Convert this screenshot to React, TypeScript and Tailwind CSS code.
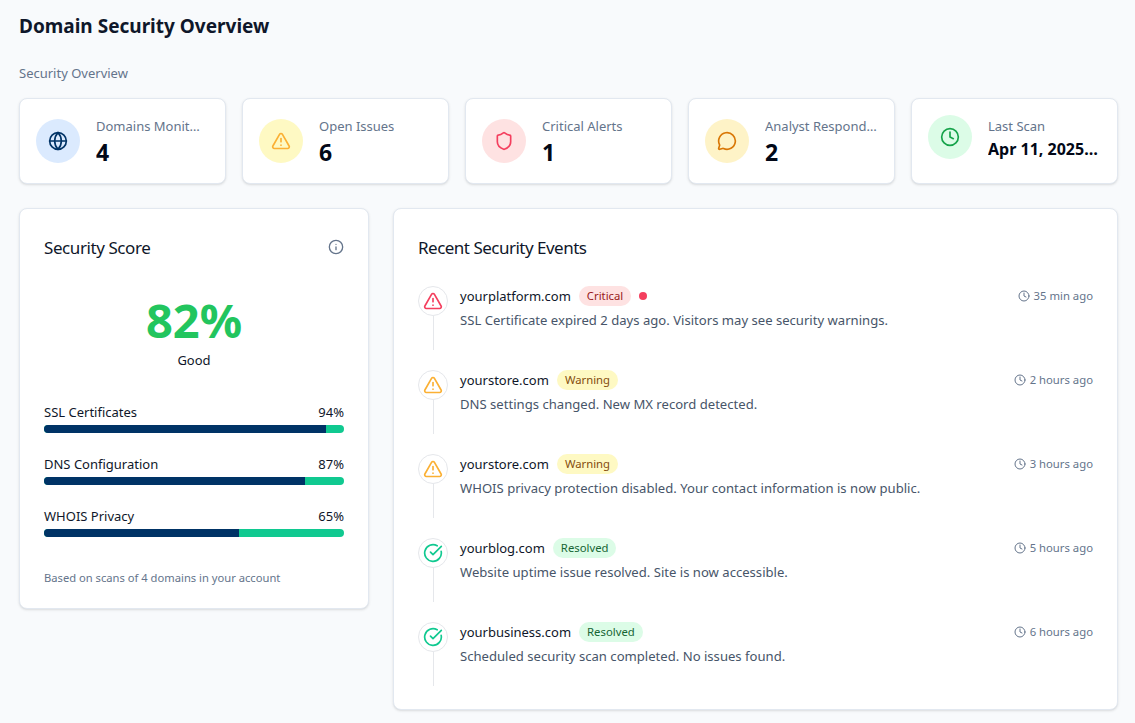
import { Globe, TriangleAlert, Shield, MessageCircle, Clock, Info, CircleCheckBig } from "lucide-react";

const stats = [
  { label: "Domains Monitored", value: "4", icon: Globe, bg: "bg-[#dbeafe]", color: "text-[#003366]", labelCls: "pr-0.5" },
  { label: "Open Issues", value: "6", icon: TriangleAlert, bg: "bg-[#fef9c3]", color: "text-[#fbb034]" },
  { label: "Critical Alerts", value: "1", icon: Shield, bg: "bg-[#fee2e2]", color: "text-[#f43f5e]" },
  { label: "Analyst Responded", value: "2", icon: MessageCircle, bg: "bg-[#fef3c7]", color: "text-[#d97706]" },
  { label: "Last Scan", value: "Apr 11, 2025 09:42", icon: Clock, bg: "bg-[#dcfce7]", color: "text-[#16a34a]", small: true },
];

const scores = [
  { label: "SSL Certificates", pct: 94 },
  { label: "DNS Configuration", pct: 87 },
  { label: "WHOIS Privacy", pct: 65 },
];

const badges = {
  critical: { label: "Critical", cls: "bg-[#fee2e2] text-[#991b1b]", icon: TriangleAlert, color: "text-[#f43f5e]" },
  warning: { label: "Warning", cls: "bg-[#fef9c3] text-[#854d0e]", icon: TriangleAlert, color: "text-[#fbb034]" },
  resolved: { label: "Resolved", cls: "bg-[#dcfce7] text-[#166534]", icon: CircleCheckBig, color: "text-[#10c990]" },
};

const events = [
  { domain: "yourplatform.com", type: "critical", text: "SSL Certificate expired 2 days ago. Visitors may see security warnings.", time: "35 min ago", live: true },
  { domain: "yourstore.com", type: "warning", text: "DNS settings changed. New MX record detected.", time: "2 hours ago" },
  { domain: "yourstore.com", type: "warning", text: "WHOIS privacy protection disabled. Your contact information is now public.", time: "3 hours ago" },
  { domain: "yourblog.com", type: "resolved", text: "Website uptime issue resolved. Site is now accessible.", time: "5 hours ago" },
  { domain: "yourbusiness.com", type: "resolved", text: "Scheduled security scan completed. No issues found.", time: "6 hours ago" },
] as const;

export default function App() {
  return (
    <div className="min-h-screen bg-[#f8fafc] pl-[19px] pr-[17px] pt-[12px] font-['Noto_Sans',sans-serif] text-[#0f172a]">
      <h1 className="text-[19px] leading-[28px] font-bold">Domain Security Overview</h1>
      <p className="mt-[24px] text-[13px] leading-[18px] text-[#64748b]">Security Overview</p>

      {/* Stat cards */}
      <div className="mt-[16px] grid grid-cols-5 gap-4">
        {stats.map((s) => (
          <div key={s.label} className="rounded-lg border border-[#e2e8f0] bg-white p-4 shadow-sm">
            <div className="flex items-center gap-4">
              <div className={`flex h-11 w-11 shrink-0 items-center justify-center rounded-full ${s.small ? "self-start" : ""} ${s.bg} ${s.color}`}>
                <s.icon className="h-5 w-5" />
              </div>
              <div className="min-w-0">
                <p className={`truncate text-[13px] leading-[22px] text-[#64748b] ${s.labelCls ?? ""}`}>{s.label}</p>
                <p className={`truncate font-bold text-[#020817] ${s.small ? "text-[16px] leading-[24px]" : "text-[23px] leading-[30px]"}`}>{s.value}</p>
              </div>
            </div>
          </div>
        ))}
      </div>

      <div className="mt-6 flex items-start gap-6 pb-[13px]">
        {/* Score */}
        <div className="h-[401px] w-[350px] shrink-0 rounded-lg border border-[#e2e8f0] bg-white p-6 shadow-sm">
          <div className="flex h-[30px] items-center justify-between">
            <h2 className="text-[17px] leading-[30px] tracking-tight">Security Score</h2>
            <Info className="-mt-0.5 h-4 w-4 text-[#64748b]" />
          </div>
          <div className="mt-[27px] text-center">
            <p className="text-[47px] leading-[60px] font-bold text-[#22c55e]">82%</p>
            <p className="text-[13px] leading-[20px]">Good</p>
          </div>
          <div className="mt-[32px] flex flex-col gap-[21px]">
            {scores.map((r) => (
              <div key={r.label}>
                <div className="flex justify-between text-[13px] leading-[20px]">
                  <span>{r.label}</span>
                  <span>{r.pct}%</span>
                </div>
                <div className="mt-[3px] h-2 overflow-hidden rounded-full bg-[#10c990]">
                  <div className="h-full bg-[#003366]" style={{ width: `${r.pct}%` }} />
                </div>
              </div>
            ))}
          </div>
          <p className="mt-[33px] text-[11.2px] leading-[16px] text-[#64748b]">Based on scans of 4 domains in your account</p>
        </div>

        {/* Events */}
        <div className="h-[502px] flex-1 rounded-lg border border-[#e2e8f0] bg-white p-6 shadow-sm">
          <h2 className="text-[17px] leading-[30px] tracking-[-0.03em]">Recent Security Events</h2>
          <div className="mt-[23px]">
            {events.map((e) => {
              const b = badges[e.type];
              return (
                <div key={e.text} className="flex h-[84px] gap-3">
                  <div className="flex w-[30px] shrink-0 flex-col items-center">
                    <div className={`flex h-[30px] w-[30px] items-center justify-center rounded-full border border-[#e5e7eb] bg-white ${b.color}`}>
                      <b.icon className="h-5 w-5" />
                    </div>
                    <div className="h-[34px] w-px bg-[#e5e7eb]" />
                  </div>
                  <div className="min-w-0 flex-1">
                    <div className="flex items-start justify-between">
                      <div className="flex h-[20px] items-center gap-2">
                        <span className="text-[13px] leading-[20px]">{e.domain}</span>
                        <span className={`rounded-full px-2 text-[11.3px] leading-[20px] ${b.cls}`}>{b.label}</span>
                        {"live" in e && <span className="h-2 w-2 rounded-full bg-[#f43f5e]" />}
                      </div>
                      <span className="flex items-center gap-1 text-[11.3px] leading-[20px] text-[#64748b]">
                        <Clock className="h-3 w-3" />
                        {e.time}
                      </span>
                    </div>
                    <p className="mt-[4px] text-[13.1px] leading-[20px] text-[#475569]">{e.text}</p>
                  </div>
                </div>
              );
            })}
          </div>
        </div>
      </div>
    </div>
  );
}
